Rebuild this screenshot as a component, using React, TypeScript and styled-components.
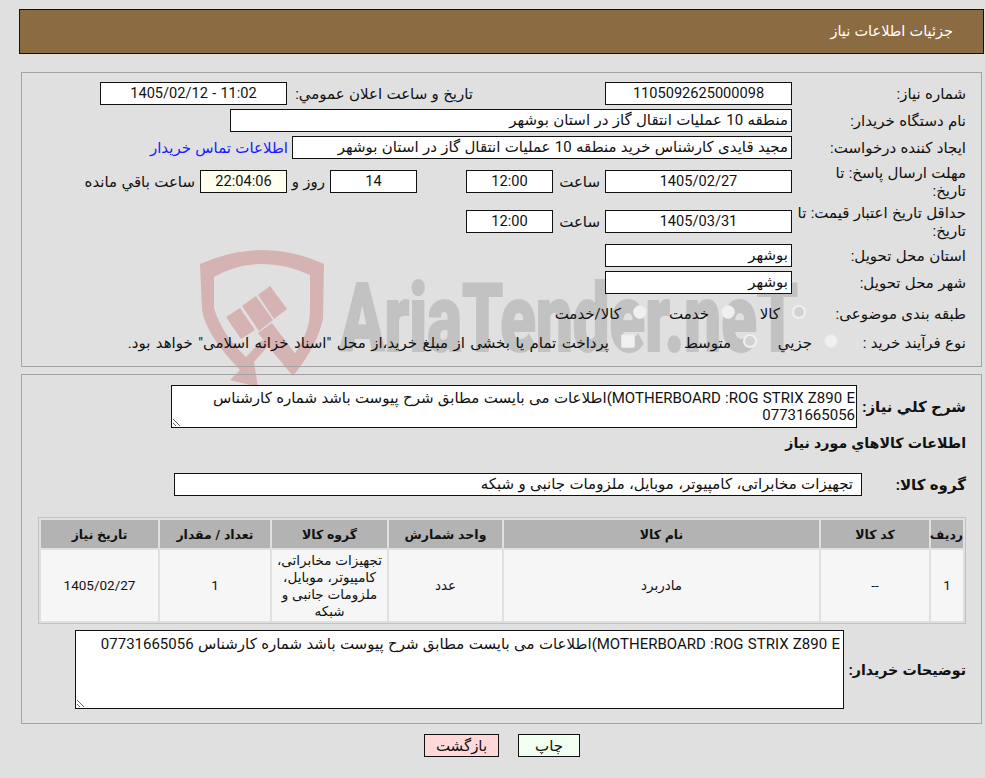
import React from "react";
import styled, { createGlobalStyle } from "styled-components";

const GlobalStyle = createGlobalStyle`
  html, body {
    margin: 0;
    padding: 0;
    background: #e0e0e0;
  }
  body {
    font-family: Roboto, "DejaVu Sans", sans-serif;
    font-size: 15px;
    word-spacing: 0.6px;
    color: #111;
  }
`;

const Page = styled.div`
  position: relative;
  width: 985px;
  height: 778px;
  overflow: hidden;
  padding-top: 9px;
  box-sizing: border-box;
`;

const Watermark = styled.svg`
  position: absolute;
  left: 0;
  top: 0;
  z-index: 0;
  pointer-events: none;
`;

const Header = styled.div`
  position: relative;
  z-index: 1;
  box-sizing: border-box;
  display: flex;
  align-items: center;
  direction: rtl;
  width: 965px;
  height: 45px;
  margin-left: 19px;
  padding: 0 30px 0 0;
  font-size: 14.5px;
  background: #8b6b42;
  border: 1px solid #111;
  color: #fff;
`;

const Panel = styled.div<{ $top: number; $height: number }>`
  position: relative;
  z-index: 1;
  box-sizing: border-box;
  direction: rtl;
  width: 961px;
  height: ${(p) => p.$height}px;
  margin: ${(p) => p.$top}px 0 0 21px;
  padding-right: 15px;
  border: 1px solid #a3a3a3;
`;

const Row = styled.div<{ $top: number }>`
  display: flex;
  align-items: center;
  height: 23px;
  margin-top: ${(p) => p.$top}px;
`;

const Label = styled.div<{ $w: number; $bold?: boolean; $size?: number }>`
  flex: none;
  width: ${(p) => p.$w}px;
  font-size: ${(p) => p.$size ?? 15}px;
  line-height: 18px;
  white-space: nowrap;
  font-weight: ${(p) => (p.$bold ? "bold" : "normal")};
`;

const Field = styled.div<{ $w: number; $center?: boolean; $bg?: string; $mr?: number; $pad?: number }>`
  flex: none;
  box-sizing: border-box;
  width: ${(p) => p.$w}px;
  height: 23px;
  margin-right: ${(p) => p.$mr ?? 0}px;
  padding: 0 ${(p) => p.$pad ?? 3}px;
  font-size: ${(p) => (p.$center ? "14.6px" : "15px")};
  line-height: 21px;
  text-align: ${(p) => (p.$center ? "center" : "right")};
  white-space: nowrap;
  overflow: hidden;
  background: ${(p) => p.$bg ?? "#fff"};
  border: 1px solid #111;
`;

const Note = styled.div<{ $mr: number; $w?: number; $color?: string }>`
  flex: none;
  width: ${(p) => (p.$w ? `${p.$w}px` : "auto")};
  margin-right: ${(p) => p.$mr}px;
  white-space: nowrap;
  color: ${(p) => p.$color ?? "inherit"};
`;

const Option = styled.div<{ $w?: number; $wide?: boolean }>`
  flex: none;
  display: flex;
  align-items: center;
  gap: 12px;
  width: ${(p) => (p.$w ? `${p.$w}px` : "auto")};
  word-spacing: ${(p) => (p.$wide ? "1.7px" : "inherit")};
  white-space: nowrap;
`;

const Radio = styled.span<{ $checked?: boolean }>`
  flex: none;
  box-sizing: border-box;
  width: 14px;
  height: 14px;
  margin-top: -3px;
  border-radius: 50%;
  background: ${(p) => (p.$checked ? "#d2d2d2" : "#f0f0f0")};
  border: ${(p) => (p.$checked ? "2px solid #f0f0f0" : "1px solid #e6e6e6")};
`;

const Check = styled.span`
  flex: none;
  box-sizing: border-box;
  width: 14px;
  height: 14px;
  margin-top: -3px;
  border-radius: 2px;
  background: #f0f0f0;
  border: 1px solid #e6e6e6;
`;

const Area = styled.textarea<{ $w: number; $h: number; $padTop: number; $padX: number }>`
  flex: none;
  box-sizing: border-box;
  width: ${(p) => p.$w}px;
  height: ${(p) => p.$h}px;
  margin: 0;
  padding: ${(p) => p.$padTop}px ${(p) => p.$padX}px 0;
  font: inherit;
  word-spacing: inherit;
  line-height: 17px;
  color: inherit;
  background: #fff;
  border: 1px solid #111;
  border-radius: 0;
  outline: none;
`;

const AreaRow = styled.div<{ $top: number; $h: number }>`
  display: flex;
  align-items: center;
  height: ${(p) => p.$h}px;
  margin-top: ${(p) => p.$top}px;
`;

const Heading = styled.div`
  height: 18px;
  margin-top: 6px;
  font-size: 14.2px;
  line-height: 18px;
  font-weight: bold;
`;

const Grid = styled.table`
  box-sizing: border-box;
  width: 928px;
  margin-top: 21px;
  table-layout: fixed;
  border-collapse: separate;
  border-spacing: 2px;
  border: 1px solid #c2c2c2;
`;

const HeadCell = styled.th<{ $w?: number }>`
  width: ${(p) => (p.$w ? `${p.$w}px` : "auto")};
  height: 28px;
  padding: 0;
  background: #b3b3b3;
  font-size: 12.5px;
  text-align: center;
  font-weight: bold;
`;

const Cell = styled.td`
  height: 71px;
  padding: 0 4px;
  box-sizing: border-box;
  background: #f6f6f6;
  font-size: 13.5px;
  text-align: center;
  line-height: 17px;
`;

const Buttons = styled.div`
  position: relative;
  z-index: 1;
  display: flex;
  direction: rtl;
  gap: 19px;
  margin-top: 10px;
  padding-right: 405px;
`;

const Button = styled.button<{ $bg: string; $w: number }>`
  box-sizing: border-box;
  width: ${(p) => p.$w}px;
  height: 23px;
  padding: 0;
  font: inherit;
  color: inherit;
  background: ${(p) => p.$bg};
  border: 1px solid #111;
`;

const description =
  "MOTHERBOARD :ROG STRIX Z890 E)اطلاعات می بایست مطابق شرح پیوست باشد شماره کارشناس 07731665056";

const App = () => (
  <Page>
    <GlobalStyle />
    <Watermark width="985" height="778" viewBox="0 0 985 778">
      <g fill="#d6b3b3">
        <path
          fillRule="evenodd"
          d="M200 264 Q232 250 262 250 Q294 250 324 264 L323 318 Q318 345 293 376 L268 346 L254 362 L258 387 L230 380 L240 370 Q206 335 202 310 Z M214 277 L214 308 Q222 335 246 357 L262 340 L290 360 Q310 335 310 310 L310 275 Q286 264 262 264 Q236 264 214 277 Z"
        />
        <path d="M226 317 L240 308 L255 330 L241 339 Z" />
        <path d="M242 306 L256 296 L273 320 L259 331 Z" />
        <path d="M258 295 L270 286 L287 309 L274 319 Z" />
        <path d="M258 333 L272 323 L300 360 L290 372 Z" />
      </g>
      <text
        x="340"
        y="351"
        textLength="458"
        lengthAdjust="spacingAndGlyphs"
        fontFamily="Roboto, sans-serif"
        fontWeight="900"
        fontSize="95"
        fill="#c2c2c2"
        stroke="#c2c2c2"
        strokeWidth="2"
      >
        AriaTender.neT
      </text>
    </Watermark>

    <Header>جزئیات اطلاعات نیاز</Header>

    <Panel $top={18} $height={295}>
      <Row $top={9}>
        <Label $w={174}>شماره نیاز:</Label>
        <Field $w={187} $center>1105092625000098</Field>
        <Note $mr={132} $w={180}>تاریخ و ساعت اعلان عمومي:</Note>
        <Field $w={187} $center $mr={6}>11:02 - 1405/02/12</Field>
      </Row>
      <Row $top={4}>
        <Label $w={174}>نام دستگاه خریدار:</Label>
        <Field $w={562}>منطقه 10 عملیات انتقال گاز در استان بوشهر</Field>
      </Row>
      <Row $top={4}>
        <Label $w={174}>ایجاد کننده درخواست:</Label>
        <Field $w={500}>مجید قایدی کارشناس خرید منطقه 10 عملیات انتقال گاز در استان بوشهر</Field>
        <Note $mr={4} $color="#1a1aff">اطلاعات تماس خریدار</Note>
      </Row>
      <Row $top={11}>
        <Label $w={174}>مهلت ارسال پاسخ: تا<br />تاریخ:</Label>
        <Field $w={187} $center>1405/02/27</Field>
        <Note $mr={5} $w={47}>ساعت</Note>
        <Field $w={87} $center>12:00</Field>
        <Field $w={87} $center $mr={49}>14</Field>
        <Note $mr={5} $w={33}>روز و</Note>
        <Field $w={87} $center $bg="#fffff0" $mr={5}>22:04:06</Field>
        <Note $mr={5}>ساعت باقي مانده</Note>
      </Row>
      <Row $top={17}>
        <Label $w={174}>حداقل تاریخ اعتبار قیمت: تا<br />تاریخ:</Label>
        <Field $w={187} $center>1405/03/31</Field>
        <Note $mr={5} $w={47}>ساعت</Note>
        <Field $w={87} $center>12:00</Field>
      </Row>
      <Row $top={11}>
        <Label $w={174}>استان محل تحویل:</Label>
        <Field $w={187}>بوشهر</Field>
      </Row>
      <Row $top={4}>
        <Label $w={174}>شهر محل تحویل:</Label>
        <Field $w={187}>بوشهر</Field>
      </Row>
      <Row $top={8}>
        <Label $w={160}>طبقه بندی موضوعی:</Label>
        <Option $w={71}><Radio $checked />کالا</Option>
        <Option $w={88}><Radio />خدمت</Option>
        <Option><Radio />کالا/خدمت</Option>
      </Row>
      <Row $top={6}>
        <Label $w={128}>نوع فرآیند خرید :</Label>
        <Option $w={81}><Radio />جزیي</Option>
        <Option $w={122}><Radio $checked />متوسط</Option>
        <Option $wide><Check />پرداخت تمام یا بخشی از مبلغ خرید،از محل "اسناد خزانه اسلامی" خواهد بود.</Option>
      </Row>
    </Panel>

    <Panel $top={7} $height={350}>
      <AreaRow $top={10} $h={43}>
        <Label $w={109} $bold>شرح کلي نیاز:</Label>
        <Area $w={686} $h={43} $padTop={4} $padX={1} readOnly defaultValue={description} />
      </AreaRow>
      <Heading>اطلاعات کالاهاي مورد نیاز</Heading>
      <Row $top={21}>
        <Label $w={104} $bold>گروه کالا:</Label>
        <Field $w={688} $pad={8}>تجهیزات مخابراتی، کامپیوتر، موبایل، ملزومات جانبی و شبکه</Field>
      </Row>
      <Grid>
        <thead>
          <tr>
            <HeadCell $w={32}>ردیف</HeadCell>
            <HeadCell $w={108}>کد کالا</HeadCell>
            <HeadCell $w={315}>نام کالا</HeadCell>
            <HeadCell $w={113}>واحد شمارش</HeadCell>
            <HeadCell $w={115}>گروه کالا</HeadCell>
            <HeadCell $w={110}>تعداد / مقدار</HeadCell>
            <HeadCell>تاریخ نیاز</HeadCell>
          </tr>
        </thead>
        <tbody>
          <tr>
            <Cell>1</Cell>
            <Cell>--</Cell>
            <Cell>مادربرد</Cell>
            <Cell>عدد</Cell>
            <Cell>تجهیزات مخابراتی، کامپیوتر، موبایل، ملزومات جانبی و شبکه</Cell>
            <Cell>1</Cell>
            <Cell>1405/02/27</Cell>
          </tr>
        </tbody>
      </Grid>
      <AreaRow $top={6} $h={79}>
        <Label $w={122} $bold $size={14.2}>توضیحات خریدار:</Label>
        <Area $w={769} $h={79} $padTop={5} $padX={3} readOnly defaultValue={description} />
      </AreaRow>
    </Panel>

    <Buttons>
      <Button $bg="#f0fff0" $w={62}>چاپ</Button>
      <Button $bg="#ffd9d9" $w={75}>بازگشت</Button>
    </Buttons>
  </Page>
);

export default App;
